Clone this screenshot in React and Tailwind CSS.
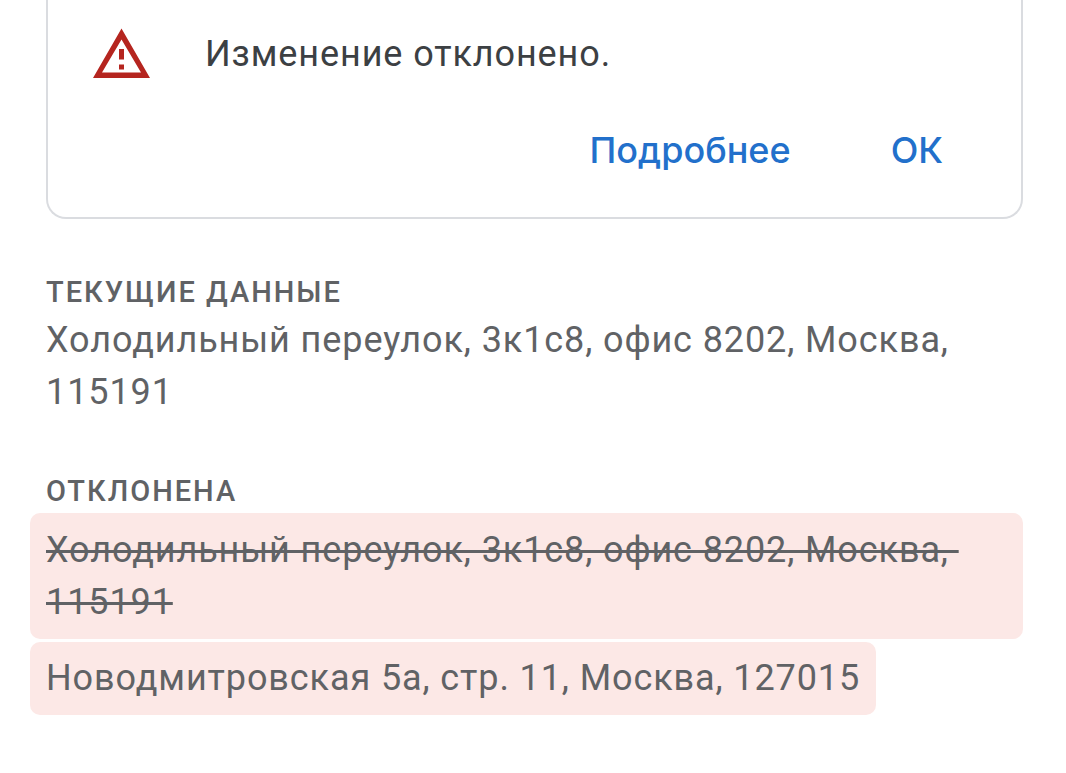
import React from 'react';

const WarningIcon = () => (
    <svg viewBox="0 0 58 50" className="w-[58px] h-[50px] shrink-0" fill="none" aria-hidden="true">
        <path fillRule="evenodd" clipRule="evenodd" d="M28.500 0.500 57 50H0L28.500 0.500Zm0 11L9 44.500h39L28.500 11.500Z" fill="#b5251f" />
        <path d="M26 21h5v10.500h-5zM26 36.500h5v5h-5z" fill="#b5251f" />
    </svg>
);

const NoticeCard = () => (
    <section className="border-2 border-t-0 border-[#dadce0] rounded-b-[20px] pt-7 pl-[45px] pr-[54px] pb-[35px]">
        <div className="flex items-start gap-[54px]">
            <WarningIcon />
            <p className="text-[36px] leading-[52px] text-[#3c4043]">Изменение отклонено.</p>
        </div>
        <div className="flex justify-end gap-[52px] mt-[38px] font-['Inter','Roboto',sans-serif] font-medium text-[36px] leading-[64px] tracking-normal text-[#2270cb]">
            <button type="button" className="px-6">Подробнее</button>
            <button type="button" className="px-6">ОК</button>
        </div>
    </section>
);

const App = () => {
    return (
        <main className="bg-white min-h-screen pl-[46px] pr-[43px] font-['Roboto',sans-serif] text-[36px] leading-[52px] text-[#606265] tracking-wide">
            <NoticeCard />

            <section className="mt-[53px]">
                <h2 className="text-[29px] leading-[40px] mb-0.5 font-medium tracking-[2px]">ТЕКУЩИЕ ДАННЫЕ</h2>
                <p>Холодильный переулок, 3к1с8, офис 8202, Москва, 115191</p>
            </section>

            <section className="mt-[53px]">
                <h2 className="text-[29px] leading-[40px] mb-0.5 font-medium tracking-[2px]">ОТКЛОНЕНА</h2>
                <div className="-ml-4 flex flex-col items-start gap-[3px]">
                    <p className="w-full bg-[#fce8e6] rounded-[10px] px-4 py-[11px] whitespace-break-spaces">
                        <s className="decoration-[3px]">Холодильный переулок, 3к1с8, офис 8202, Москва, 115191</s>
                    </p>
                    <p className="bg-[#fce8e6] rounded-[10px] px-4 pt-[10px] pb-[11px]">Новодмитровская 5а, стр. 11, Москва, 127015</p>
                </div>
            </section>
        </main>
    );
};

export default App;
